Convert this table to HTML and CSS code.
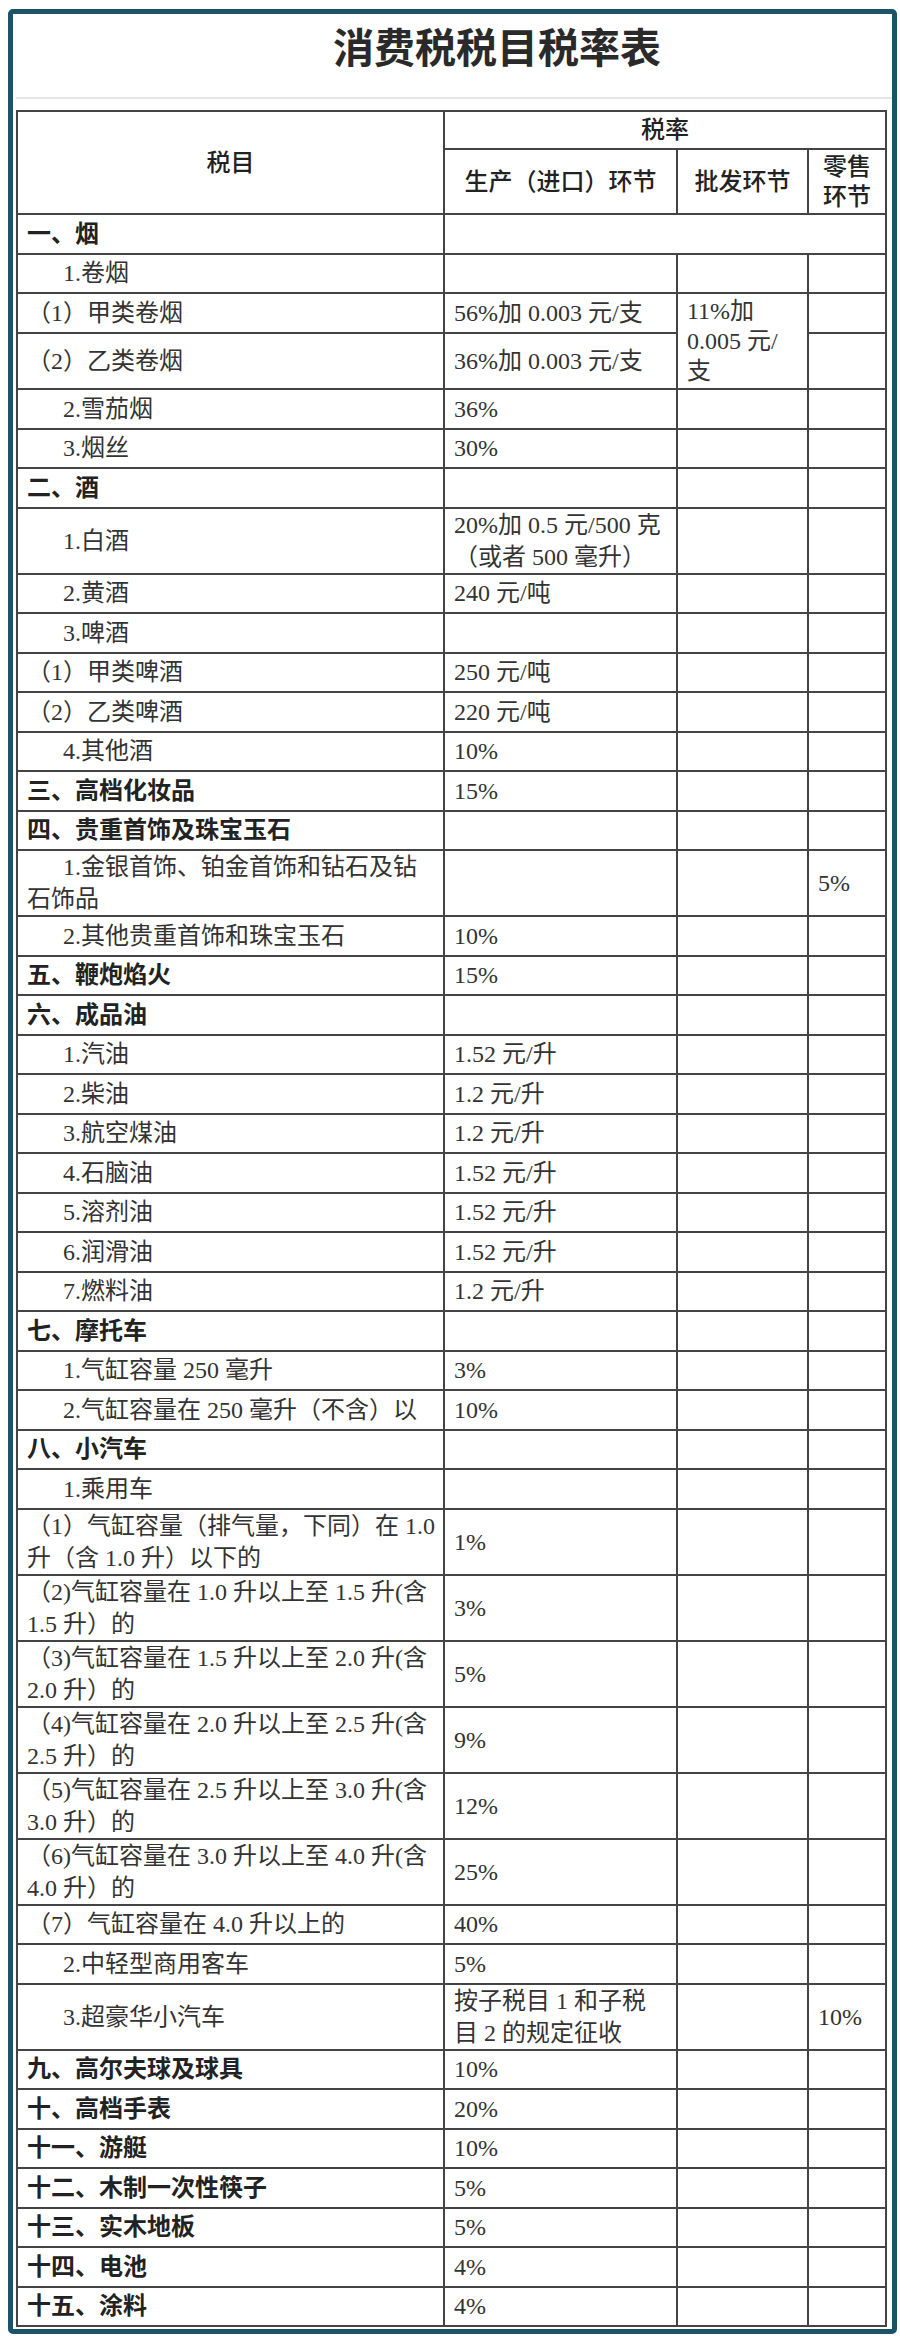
FILE: index.html
```html
<!DOCTYPE html>
<html lang="zh-CN">
<head>
<meta charset="utf-8">
<title>消费税税目税率表</title>
<link rel="stylesheet" href="styles.css">
</head>
<body>
<div class="frame">
  <h1 class="title">消费税税目税率表</h1>
  <div class="sheet">
    <table class="rates">
      <colgroup>
        <col class="c-item"><col class="c-prod"><col class="c-whole"><col class="c-retail">
      </colgroup>
      <thead>
        <tr class="h-top">
          <th rowspan="2">税目</th>
          <th colspan="3">税率</th>
        </tr>
        <tr class="h-sub">
          <th>生产（进口）环节</th>
          <th>批发环节</th>
          <th class="two">零售<br>环节</th>
        </tr>
      </thead>
      <tbody>
        <tr><td class="sec">一、烟</td><td colspan="3"></td></tr>
        <tr><td class="sub">1.卷烟</td><td></td><td></td><td></td></tr>
        <tr class="r-a"><td class="par">（1）甲类卷烟</td><td>56%加 0.003 元/支</td><td rowspan="2" class="whole">11%加<br>0.005 元/<br>支</td><td></td></tr>
        <tr class="r-b"><td class="par">（2）乙类卷烟</td><td>36%加 0.003 元/支</td><td></td></tr>
        <tr><td class="sub">2.雪茄烟</td><td>36%</td><td></td><td></td></tr>
        <tr><td class="sub">3.烟丝</td><td>30%</td><td></td><td></td></tr>
        <tr><td class="sec">二、酒</td><td></td><td></td><td></td></tr>
        <tr class="r2"><td class="sub">1.白酒</td><td>20%加 0.5 元/500 克<br>（或者 500 毫升）</td><td></td><td></td></tr>
        <tr><td class="sub">2.黄酒</td><td>240 元/吨</td><td></td><td></td></tr>
        <tr><td class="sub">3.啤酒</td><td></td><td></td><td></td></tr>
        <tr><td class="par">（1）甲类啤酒</td><td>250 元/吨</td><td></td><td></td></tr>
        <tr><td class="par">（2）乙类啤酒</td><td>220 元/吨</td><td></td><td></td></tr>
        <tr><td class="sub">4.其他酒</td><td>10%</td><td></td><td></td></tr>
        <tr><td class="sec">三、高档化妆品</td><td>15%</td><td></td><td></td></tr>
        <tr><td class="sec">四、贵重首饰及珠宝玉石</td><td></td><td></td><td></td></tr>
        <tr class="r2"><td class="sub">1.金银首饰、铂金首饰和钻石及钻<br>石饰品</td><td></td><td></td><td>5%</td></tr>
        <tr><td class="sub">2.其他贵重首饰和珠宝玉石</td><td>10%</td><td></td><td></td></tr>
        <tr><td class="sec">五、鞭炮焰火</td><td>15%</td><td></td><td></td></tr>
        <tr><td class="sec">六、成品油</td><td></td><td></td><td></td></tr>
        <tr><td class="sub">1.汽油</td><td>1.52 元/升</td><td></td><td></td></tr>
        <tr><td class="sub">2.柴油</td><td>1.2 元/升</td><td></td><td></td></tr>
        <tr><td class="sub">3.航空煤油</td><td>1.2 元/升</td><td></td><td></td></tr>
        <tr><td class="sub">4.石脑油</td><td>1.52 元/升</td><td></td><td></td></tr>
        <tr><td class="sub">5.溶剂油</td><td>1.52 元/升</td><td></td><td></td></tr>
        <tr><td class="sub">6.润滑油</td><td>1.52 元/升</td><td></td><td></td></tr>
        <tr><td class="sub">7.燃料油</td><td>1.2 元/升</td><td></td><td></td></tr>
        <tr><td class="sec">七、摩托车</td><td></td><td></td><td></td></tr>
        <tr><td class="sub">1.气缸容量 250 毫升</td><td>3%</td><td></td><td></td></tr>
        <tr><td class="sub">2.气缸容量在 250 毫升（不含）以</td><td>10%</td><td></td><td></td></tr>
        <tr><td class="sec">八、小汽车</td><td></td><td></td><td></td></tr>
        <tr><td class="sub">1.乘用车</td><td></td><td></td><td></td></tr>
        <tr class="r2"><td class="par">（1）气缸容量（排气量，下同）在 1.0<br>升（含 1.0 升）以下的</td><td>1%</td><td></td><td></td></tr>
        <tr class="r2"><td class="par">（2)气缸容量在 1.0 升以上至 1.5 升(含<br>1.5 升）的</td><td>3%</td><td></td><td></td></tr>
        <tr class="r2"><td class="par">（3)气缸容量在 1.5 升以上至 2.0 升(含<br>2.0 升）的</td><td>5%</td><td></td><td></td></tr>
        <tr class="r2"><td class="par">（4)气缸容量在 2.0 升以上至 2.5 升(含<br>2.5 升）的</td><td>9%</td><td></td><td></td></tr>
        <tr class="r2"><td class="par">（5)气缸容量在 2.5 升以上至 3.0 升(含<br>3.0 升）的</td><td>12%</td><td></td><td></td></tr>
        <tr class="r2"><td class="par">（6)气缸容量在 3.0 升以上至 4.0 升(含<br>4.0 升）的</td><td>25%</td><td></td><td></td></tr>
        <tr><td class="par">（7）气缸容量在 4.0 升以上的</td><td>40%</td><td></td><td></td></tr>
        <tr><td class="sub">2.中轻型商用客车</td><td>5%</td><td></td><td></td></tr>
        <tr class="r2"><td class="sub">3.超豪华小汽车</td><td>按子税目 1 和子税<br>目 2 的规定征收</td><td></td><td>10%</td></tr>
        <tr><td class="sec">九、高尔夫球及球具</td><td>10%</td><td></td><td></td></tr>
        <tr><td class="sec">十、高档手表</td><td>20%</td><td></td><td></td></tr>
        <tr><td class="sec">十一、游艇</td><td>10%</td><td></td><td></td></tr>
        <tr><td class="sec">十二、木制一次性筷子</td><td>5%</td><td></td><td></td></tr>
        <tr><td class="sec">十三、实木地板</td><td>5%</td><td></td><td></td></tr>
        <tr><td class="sec">十四、电池</td><td>4%</td><td></td><td></td></tr>
        <tr><td class="sec">十五、涂料</td><td>4%</td><td></td><td></td></tr>
      </tbody>
    </table>
  </div>
</div>
</body>
</html>
```

FILE: styles.css
```css
html, body {
  margin: 0;
  padding: 0;
  background: #ffffff;
}

body {
  font-family: "Liberation Serif", "Noto Sans CJK SC", serif;
  color: #333333;
}

.frame {
  box-sizing: border-box;
  width: 889px;
  margin: 9px 0 0 8px;
  border: 5px solid #1c5369;
  border-radius: 5px;
  padding: 0 0 2px 3px;
  background: #ffffff;
}

.title {
  margin: 0 0 21px 0;
  padding-left: 86px;
  height: 62px;
  line-height: 62px;
  text-align: center;
  font-family: "Noto Sans CJK SC", "Noto Sans", sans-serif;
  font-weight: 700;
  font-size: 41px;
  color: #2a2a2a;
  letter-spacing: 0;
}

.sheet {
  border-top: 2px solid #e6e6e6;
  padding-top: 11px;
}

.rates {
  border-collapse: collapse;
  table-layout: fixed;
  width: 869px;
  font-size: 24px;
  line-height: 32px;
}

.c-item { width: 427px; }
.c-prod { width: 233px; }
.c-whole { width: 131px; }
.c-retail { width: 78px; }

.rates th,
.rates td {
  border: 2px solid #444444;
  padding: 0 4px 0 9px;
  vertical-align: middle;
  text-align: left;
  white-space: nowrap;
  overflow: hidden;
}

.rates th {
  font-weight: 500;
  text-align: center;
  color: #222222;
  padding: 0;
}

.rates th.two {
  line-height: 30px;
}

.h-top { height: 38px; }
.h-sub { height: 65px; }

.rates tbody tr { height: 39.5px; }
.rates tbody tr.r2 { height: 65.5px; }
.rates tbody tr.r-a { height: 40px; }
.rates tbody tr.r-b { height: 56px; }

.sec {
  font-weight: 700;
  color: #222222;
}

.sub {
  text-indent: 36px;
}

.par {
  text-indent: 0;
}

.whole {
  line-height: 30px;
  padding-left: 9px;
}
```
